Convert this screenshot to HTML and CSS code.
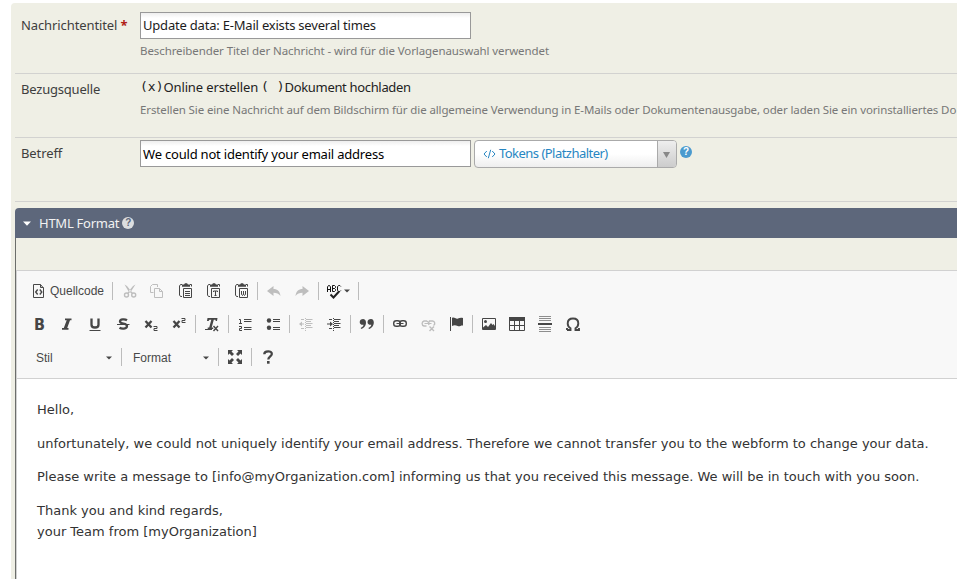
FILE: index.html
```html
<!DOCTYPE html>
<html lang="de">
<head>
<meta charset="utf-8">
<title>Nachrichtenvorlage</title>
<link rel="stylesheet" href="styles.css">
</head>
<body>
<main class="form">
  <section class="row row-title">
    <div class="label">Nachrichtentitel <span class="required">*</span></div>
    <div class="content">
      <div class="field field-title"><span class="t-title">Update data: E-Mail exists several times</span></div>
      <p class="help help-title">Beschreibender Titel der Nachricht - wird für die Vorlagenauswahl verwendet</p>
    </div>
  </section>
  <section class="row row-source">
    <div class="label label-source">Bezugsquelle</div>
    <div class="content">
      <div class="choices"><span class="mark">(x)</span><span class="choice">Online erstellen</span><span class="mark mark-empty">( )</span><span class="choice-doc">Dokument hochladen</span></div>
      <p class="help help-source">Erstellen Sie eine Nachricht auf dem Bildschirm für die allgemeine Verwendung in E-Mails oder Dokumentenausgabe, oder laden Sie ein vorinstalliertes Do</p>
    </div>
  </section>
  <section class="row row-subject">
    <div class="label label-subject">Betreff</div>
    <div class="content subject">
      <div class="field field-subject"><span class="t-subject">We could not identify your email address</span></div>
      <div class="tokens">
        <svg class="code" width="13" height="10" viewBox="0 0 13 10"><path d="M3.8 2 1 5l2.800 3M9.200 2 12 5 9.200 8M7.700.8 5.300 9.200"/></svg>
        <span class="token-text">Tokens (Platzhalter)</span>
        <span class="token-arrow"><svg width="7" height="6" viewBox="0 0 7 6"><path d="M0 0h7L3.500 6z"/></svg></span>
      </div>
      <span class="hint">?</span>
    </div>
  </section>

  <section class="accordion">
    <header class="acc-head">
      <svg width="8" height="5" viewBox="0 0 8 5"><path d="M0 .5h8L4 4.700z"/></svg>
      <span class="acc-title">HTML Format</span><span class="hint hint-light">?</span>
    </header>
    <div class="acc-body">
      <div class="editor">
        <div class="toolbar">
          <div class="tools">
            <span class="source"><svg class="ic" viewBox="0 0 16 16"><g class="s"><path d="M3 1.500h6.500L12.500 5v9.500H2.500v-13z"/><path d="M9.500 1.500v3h3"/><path class="thick" d="M6.700 6.500 4.700 9l2 2.500M8.800 6.500l2 2.500-2 2.500"/></g></svg><span>Quellcode</span></span>
            <i class="sep"></i>
            <span class="btn clip off"><svg class="ic" viewBox="0 0 16 16"><path class="f" d="M2.500 1.500 5 3l4 5-1.500 2zM13.500 1.500 11 3 6.500 8.500 8 10z"/><g class="s thick"><circle cx="4.500" cy="12" r="2"/><circle cx="11.700" cy="12" r="2"/><path d="m5.700 10.500 1.800-2M10.500 10.500l-2-2"/></g></svg></span>
            <span class="btn off"><svg class="ic" viewBox="0 0 16 16"><path class="s" d="M4.500 9.500h-3v-6l2-2h5v2.500M5.500 5.500h5l3 3v6h-8zM10.500 5.500v3h3"/></svg></span>
            <span class="btn clip"><svg class="ic" viewBox="0 0 16 16"><path class="s" d="M4 1.500H2.500L1.500 3v9l1 1.500H4M12 1.500h1.500v2M5.500 5.500h8v9h-8zM7 8.500h5M7 10.500h5M7 12.500h5"/><path class="f" d="M4 1.500h2L7 .3h2l1 1.200h2v2.200H4z"/></svg></span>
            <span class="btn clip"><svg class="ic" viewBox="0 0 16 16"><path class="s" d="M4 1.500H2.500L1.500 3v9l1 1.500H4M12 1.500h1.500v2M5.500 5.500h8v9h-8zM7.500 9V8h4v1M9.500 8v5M8.500 12.500h2"/><path class="f" d="M4 1.500h2L7 .3h2l1 1.200h2v2.200H4z"/></svg></span>
            <span class="btn clip"><svg class="ic" viewBox="0 0 16 16"><path class="s" d="M4 1.500H2.500L1.500 3v9l1 1.500H4M12 1.500h1.500v2M5.500 5.500h8v9h-8zM7.500 8v3.500l1 1 1-1.500 1 1.500 1-1V8M9.500 8v3"/><path class="f" d="M4 1.500h2L7 .3h2l1 1.200h2v2.200H4z"/></svg></span>
            <i class="sep"></i>
            <span class="btn off"><svg class="ic" viewBox="0 0 16 16"><path class="f" d="M1 8 7.500 3v3c4 0 6.500 2.500 7 7-1.700-2.500-4-3.300-7-3.300V13z"/></svg></span>
            <span class="btn off"><svg class="ic" viewBox="0 0 16 16"><path class="f" d="M15 8 8.500 3v3c-4 0-6.500 2.500-7 7 1.700-2.500 4-3.300 7-3.300V13z"/></svg></span>
            <i class="sep"></i>
            <span class="btn spell"><svg class="ic" viewBox="0 0 16 16"><path class="abc" d="M1.500 9V4l1-1.500h1l1 1.500v5M1.500 6.500h3M6.500 8.500v-6h2l1 1v1l-1 1h-2M8.500 5.500l1 1v1l-1 1h-2M14.800 3.500l-1-1h-1l-1.300 1v4l1.300 1h1l1-1"/><path class="check" d="m4.500 11.500 3 3 5.500-6"/></svg><svg class="arrow" viewBox="0 0 6 4"><path d="M0 .5h6L3 3.500z"/></svg></span>
            <i class="sep"></i>
          </div>
          <div class="tools">
            <span class="btn"><svg class="ic" viewBox="0 0 16 16"><text class="g" x="3" y="13.500" textLength="11" lengthAdjust="spacingAndGlyphs">B</text></svg></span>
            <span class="btn"><svg class="ic" viewBox="0 0 16 16"><path class="f" d="M6 2.500h6.500v1.800H11L8.200 12h1.300v1.800H3V12h1.800L7.700 4.300H6z"/></svg></span>
            <span class="btn"><svg class="ic" viewBox="0 0 16 16"><path class="heavy" d="M4.500 2.500v6.200c0 2 1.200 2.800 3.500 2.800s3.500-.8 3.500-2.800V2.500"/><path class="s" d="M2.500 14.500h11"/></svg></span>
            <span class="btn"><svg class="ic" viewBox="0 0 16 16"><path class="heavy" d="M12 4.200c-2-1.300-7-1.300-7 1.300 0 2.800 7 1.500 7 4.500 0 3.200-5.500 3-7.500 1.700"/><path class="s" d="M2 8.500h12.500"/></svg></span>
            <span class="btn"><svg class="ic" viewBox="0 0 16 16"><path class="heavy" d="m2.500 5 6 6.500M8.500 5l-6 6.500"/><path class="s" d="M10.500 10.500h3.500v2h-3v2h3.500"/></svg></span>
            <span class="btn"><svg class="ic" viewBox="0 0 16 16"><path class="heavy" d="m2.500 5 6 6.500M8.500 5l-6 6.500"/><path class="s" d="M10.500 2.500h3.500v2h-3v2h3.500"/></svg></span>
            <i class="sep"></i>
            <span class="btn"><svg class="ic" viewBox="0 0 16 16"><path class="f" d="M3.500 2h10l-.5 3h-1.300l-.2-1.200H9.800L7.700 11.500h1.500V13H3.700v-1.500h1.500L7.300 3.800H5.500L4.500 5H3z"/><path class="s" d="M1 13.500h7"/><path class="s thick" d="m9.500 10 4.500 5M14 10l-4.500 5"/></svg></span>
            <i class="sep"></i>
            <span class="btn"><svg class="ic" viewBox="0 0 16 16"><path class="s" d="M2 3.500h1.500v4M2 7.500h3M2 10.500h2.500v2h-2v2H5M7 3.500h7.500M7 5.500h7.500M7 11.500h7.500M7 13.500h7.500"/></svg></span>
            <span class="btn"><svg class="ic" viewBox="0 0 16 16"><circle class="f" cx="4" cy="4.500" r="2.200"/><circle class="f" cx="4" cy="11.800" r="2.200"/><path class="s" d="M8 3.500h7M8 5.500h7M8 11.500h7M8 13.500h7"/></svg></span>
            <i class="sep"></i>
            <span class="btn off"><svg class="ic" viewBox="0 0 16 16"><path class="s" d="M3 3.500h3M8 3.500h6.500M8 5.500h5M8 7.500h6.500M8 9.500h5M8 11.500h6.500M3 12.500h3M2 8h4"/><path class="f" d="M1 8 4 5.500v5z"/><path class="dot" d="M7.500 2v13"/></svg></span>
            <span class="btn"><svg class="ic" viewBox="0 0 16 16"><path class="s" d="M3 3.500h3M8 3.500h6.500M8 5.500h5M8 7.500h6.500M8 9.500h5M8 11.500h6.500M3 12.500h3M1 8h4"/><path class="f" d="M7 8 4 5.500v5z"/><path class="dot" d="M7.500 2v13"/></svg></span>
            <i class="sep"></i>
            <span class="btn quote"><svg class="ic" viewBox="0 0 16 16"><path id="q" class="f" d="M4.200 3c4.500 0 3.500 9-2.200 10l-.2-1.200c1.700-.6 2.600-1.600 2.700-3C2 9 .7 8 .7 6c0-1.800 1.500-3 3.500-3z"/><use href="#q" x="7.800"/></svg></span>
            <i class="sep"></i>
            <span class="btn"><svg class="ic" viewBox="0 0 16 16"><g class="s thick"><rect x="1.700" y="4.700" width="6.600" height="5.600" rx="2.600"/><rect x="7.700" y="4.700" width="6.600" height="5.600" rx="2.600"/></g><path class="s" d="M4.500 7.500h7"/></svg></span>
            <span class="btn off"><svg class="ic" viewBox="0 0 16 16"><path class="s thick" d="M6.500 10H4a2.600 2.600 0 0 1 0-5h2.500l1.500 1M9 9l-.5-2 1-2h3a2.400 2.400 0 0 1 1 4.500M9.500 10.500l4.500 4.500M14 10.500 9.500 15"/><path class="s" d="M4.500 7.500h7"/></svg></span>
            <span class="btn"><svg class="ic" viewBox="0 0 16 16"><path class="s" d="M2.500 1v14"/><path class="f" d="M4 2c2-1.500 4 1.500 6 .5 1.500-.7 3-1 5-.5v7.500c-2-.5-3.300 1.300-5.300.5C7.500 9 6 9 4 10z"/></svg></span>
            <i class="sep"></i>
            <span class="btn"><svg class="ic" viewBox="0 0 16 16"><path class="s" d="M1.500 2.500h13v11h-13z"/><circle class="f" cx="4.500" cy="5.500" r="1.500"/><path class="f" d="M2 13v-1.500L5 9l2 2 3-4 1.500 2 1-1L14 10v3z"/></svg></span>
            <span class="btn"><svg class="ic" viewBox="0 0 16 16"><path class="f" d="M0 1h16v4H0z"/><path class="s" d="M.5 2v12.500h15V2M5.500 5v9.500M10.500 5v9.500M.5 9.500h15"/></svg></span>
            <span class="btn"><svg class="ic" viewBox="0 0 16 16"><path class="rule" d="M2 .5h12M2 2.500h12M2 4.500h12M2 11.500h12M2 13.500h12M2 15.500h12"/><path class="f" d="M1 7h14v2H1z"/></svg></span>
            <span class="btn"><svg class="ic" viewBox="0 0 16 16"><path class="omega" d="M2 14h3.500v-1.800C3.500 11 2.700 9.500 2.700 7.500 2.700 4.500 4.800 2.500 8 2.500s5.300 2 5.300 5c0 2-.8 3.500-2.800 4.700V14H14v-2M2 14v-2"/></svg></span>
          </div>
          <div class="tools">
            <span class="combo combo-style"><span>Stil</span><svg class="arrow" viewBox="0 0 6 4"><path d="M0 .5h6L3 3.500z"/></svg></span>
            <i class="sep"></i>
            <span class="combo"><span>Format</span><svg class="arrow" viewBox="0 0 6 4"><path d="M0 .5h6L3 3.500z"/></svg></span>
            <i class="sep"></i>
            <span class="btn"><svg class="ic" viewBox="0 0 16 16"><path class="f" d="M1 1h5L4.500 2.500 7 5 5 7 2.500 4.500 1 6zM15 1v5l-1.500-1.500L11 7 9 5l2.500-2.500L10 1zM1 15v-5l1.500 1.500L5 9l2 2-2.500 2.500L6 15zM15 15h-5l1.500-1.500L9 11l2-2 2.500 2.500L15 10z"/></svg></span>
            <i class="sep"></i>
            <span class="btn"><svg class="ic" viewBox="0 0 16 16"><path class="heavy" d="M4.300 5.200C4.300 1.500 12 1.200 11.800 5c0 2.200-3.500 2.700-3.500 5.500"/><path class="f" d="M7 12h2.600v2.700H7z"/></svg></span>
          </div>
        </div>
        <article class="message">
          <p>Hello,</p>
          <p>unfortunately, we could not uniquely identify your email address. Therefore we cannot transfer you to the webform to change your data.</p>
          <p>Please write a message to [info@myOrganization.com] informing us that you received this message. We will be in touch with you soon.</p>
          <p>Thank you and kind regards,<br>your Team from [myOrganization]</p>
        </article>
      </div>
    </div>
  </section>
</main>
</body>
</html>
```
FILE: styles.css
```css
* { box-sizing: border-box; }
html, body { margin: 0; height: 579px; overflow: hidden; background: #fff; }
body { padding: 3px 0 0 11px; font: 13px/20px "Noto Sans", sans-serif; color: #3e3e3e; }
p { margin: 0; white-space: nowrap; }
svg { display: block; flex: none; }

.form { height: 576px; padding-left: 4px; background: #efefe5; border-top-left-radius: 4px; overflow: hidden; }
.row { display: flex; border-bottom: 1px solid #d2d2d0; padding-left: 6px; }
.row-title { height: 71px; padding-top: 9px; }
.row-source { height: 64px; padding-top: 3px; }
.row-subject { height: 64px; padding-top: 2px; }
.label { width: 119px; flex: none; padding-top: 3px; white-space: nowrap; letter-spacing: -.1px; }
.label-source { padding-top: 2px; letter-spacing: -.2px; }
.required { color: #b02015; font-weight: bold; }
.content { flex: 1; min-width: 0; }
.field { width: 331px; height: 27px; flex: none; border: 1px solid #999; background: linear-gradient(#eee, #fff 5px); padding: 0 2px; line-height: 25px; color: #1c1c1c; white-space: nowrap; letter-spacing: -.2px; }
.field-subject { color: #000; line-height: 27px; }
.help { font-size: 11.500px; line-height: 18px; color: #777; letter-spacing: -.09px; }
.help-title { margin-top: 3px; }
.help-source { margin-top: 4px; letter-spacing: -.12px; }
.choices { display: flex; height: 20px; color: #222; white-space: pre; }
.choice { letter-spacing: -.13px; }
.choice-doc { letter-spacing: -.33px; }
.mark { font-family: "DejaVu Sans Mono", monospace; font-size: 13px; }
.mark-empty { margin-left: 3px; }

.subject { display: flex; align-items: flex-start; }
.tokens { display: flex; align-items: center; width: 203px; height: 28px; margin-left: 3px; padding-left: 8px; border: 1px solid #aaa; border-radius: 4px; background: linear-gradient(#fff 50%, #eee); color: #2786c2; overflow: hidden; }
.code path { fill: none; stroke: #2786c2; stroke-width: 1; }
.token-text { margin-left: 3px; padding-bottom: 2px; white-space: nowrap; letter-spacing: -.53px; }
.token-arrow { display: flex; align-items: center; justify-content: center; width: 19px; height: 26px; margin-left: auto; padding: 2px 1px 0 0; border-left: 1px solid #aaa; background: linear-gradient(#eee, #ccc); }
.token-arrow path { fill: #888; }
.hint { width: 12px; height: 12px; margin: 6px 0 0 3px; border-radius: 50%; background: #4a9ace; color: #fff; font: bold 10px/12px "Liberation Sans", sans-serif; text-align: center; }
.hint-light { margin: 0 0 0 3px; background: #dcdee0; color: #5d677b; }

.accordion { margin-top: 6px; }
.acc-head { display: flex; align-items: center; height: 30px; padding-left: 8px; border-top-left-radius: 4px; background: #5d677b; color: #f2f2f2; }
.acc-head path { fill: #fff; }
.acc-title { margin-left: 8px; letter-spacing: -.25px; }
.acc-body { height: 341px; padding-top: 32px; border-left: 1px solid #6c6e6b; }
.editor { height: 309px; border: 1px solid #d1d1d1; border-width: 1px 0 0 1px; background: #fff; }

.toolbar { height: 108px; padding: 3px 0 0 8px; background: #f8f8f8; border-bottom: 1px solid #d1d1d1; }
.tools { display: flex; align-items: center; height: 33px; padding-top: 1px; font: 12px/16px "Liberation Sans", sans-serif; color: #484848; }
.btn { display: flex; justify-content: center; width: 28px; flex: none; color: #464646; }
.clip { padding-left: 2px; }
.off { color: #bebebe; }
.ic { width: 16px; height: 16px; }
.sep { width: 1px; height: 18px; margin: 0 2px; background: #bcbcbc; flex: none; }
.source { display: flex; width: 85px; padding-left: 6px; gap: 3px; white-space: nowrap; }
.spell { width: 35px; align-items: center; gap: 2px; padding-right: 2px; }
.arrow { width: 6px; height: 4px; fill: #464646; }
.combo { display: flex; align-items: center; justify-content: space-between; width: 92px; padding: 1px 7px 0 9px; }
.combo-style { width: 94px; padding-left: 11px; }

.f { fill: currentColor; }
.s { fill: none; stroke: currentColor; stroke-width: 1; }
.thick { stroke-width: 1.400; }
.heavy { fill: none; stroke: currentColor; stroke-width: 2.300; }
.omega { fill: none; stroke: currentColor; stroke-width: 1.900; }
.rule { stroke: #8e8e8e; }
.dot { stroke: currentColor; stroke-dasharray: 1 1; }
.abc { fill: none; stroke: #111; stroke-width: 1; }
.check { fill: none; stroke: #222; stroke-width: 2; }
.g { font: bold 15px "DejaVu Sans", sans-serif; fill: currentColor; }

.message { padding: 21px 20px 0; font: 13px/20.800px "DejaVu Sans", sans-serif; color: #333; }
.message p { margin-bottom: 12.800px; }
```
